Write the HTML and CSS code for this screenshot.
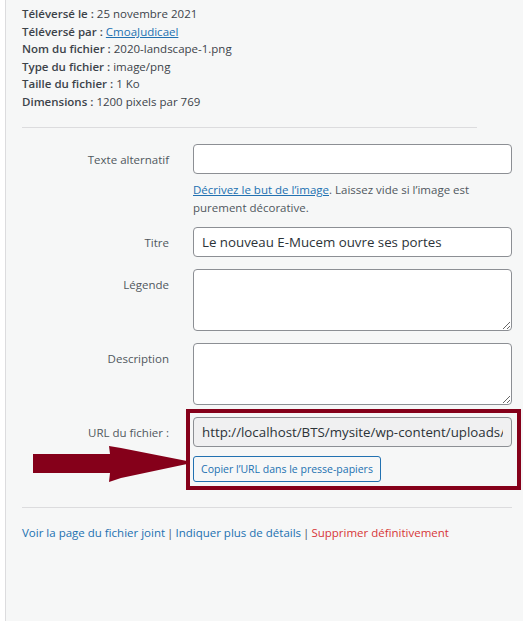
FILE: index.html
```html
<!DOCTYPE html>
<html lang="fr">
<head>
<meta charset="utf-8">
<title>Détails du fichier joint</title>
<link rel="stylesheet" href="styles.css">
</head>
<body>
<div class="panel">
  <div class="meta">
    <div><strong>Téléversé le :</strong> 25 novembre 2021</div>
    <div><strong>Téléversé par :</strong> <a href="#" class="link">CmoaJudicael</a></div>
    <div><strong>Nom du fichier :</strong> 2020-landscape-1.png</div>
    <div><strong>Type du fichier :</strong> image/png</div>
    <div><strong>Taille du fichier :</strong> 1 Ko</div>
    <div><strong>Dimensions :</strong> 1200 pixels par 769</div>
  </div>
  <hr class="sep sep-top">
  <div class="settings">
    <div class="row">
      <label class="label">Texte alternatif</label>
      <div class="field">
        <input class="input" type="text" value="">
        <p class="help"><a href="#" class="link">Décrivez le but de l’image</a>. Laissez vide si l’image est purement décorative.</p>
      </div>
    </div>
    <div class="row">
      <label class="label">Titre</label>
      <div class="field">
        <input class="input" type="text" value="Le nouveau E-Mucem ouvre ses portes">
      </div>
    </div>
    <div class="row">
      <label class="label">Légende</label>
      <div class="field">
        <textarea class="textarea"></textarea>
      </div>
    </div>
    <div class="row">
      <label class="label">Description</label>
      <div class="field">
        <textarea class="textarea"></textarea>
      </div>
    </div>
    <div class="row">
      <label class="label">URL du fichier :</label>
      <div class="field field-url">
        <input class="input input-readonly" type="text" readonly value="http://localhost/BTS/mysite/wp-content/uploads/2021/11/2020-landscape-1.png">
        <div class="copy-wrap"><button class="button-copy" type="button">Copier l’URL dans le presse-papiers</button></div>
        <div class="highlight-frame"></div>
      </div>
    </div>
  </div>
  <hr class="sep sep-bottom">
  <div class="actions">
    <a href="#" class="link plain">Voir la page du fichier joint</a><span class="pipe">|</span><a href="#" class="link plain">Indiquer plus de détails</a><span class="pipe">|</span><a href="#" class="delete">Supprimer définitivement</a>
  </div>
  <svg class="arrow" width="156" height="38" viewBox="0 0 156 38" aria-hidden="true">
    <polygon points="0,8 77,8 76,0 88,2 154,15 154,18 88,32 76,36 77,27 0,27" fill="#85001a"/>
  </svg>
</div>
</body>
</html>
```
FILE: styles.css
```css
* { box-sizing: border-box; }
html, body { margin: 0; padding: 0; background: #fff; }
body {
  font-family: "Open Sans", "Noto Sans", sans-serif;
  font-size: 11.5px;
  color: #3c434a;
}
.panel {
  position: relative;
  margin-left: 5px;
  border-left: 1px solid #dcdcde;
  background: #f6f7f7;
  min-height: 621px;
  padding: 5px 11px 0 16px;
}
.meta { line-height: 17.6px; }
.meta strong { font-weight: 600; color: #3c434a; }
.link { color: #2271b1; text-decoration: underline; }
.link.plain { text-decoration: none; }
.sep { border: 0; border-top: 1px solid #dcdcde; height: 0; margin: 16px 0 16px; }
.sep-top { width: 455px; }
.sep-bottom { width: 490px; margin: 25px 0 16px; }
.settings { display: flex; flex-direction: column; gap: 12px; }
.settings .row:first-child { margin-bottom: -2px; }
.row { display: grid; grid-template-columns: 147px 319px; column-gap: 24px; }
.label { text-align: right; color: #50575e; padding-top: 7px; line-height: 18px; }
.field { display: flex; flex-direction: column; }
.input, .textarea {
  width: 319px;
  border: 1px solid #8c8f94;
  border-radius: 4px;
  background: #fff;
  font-family: "Open Sans", "Noto Sans", sans-serif;
  font-size: 13.3px;
  color: #2c3338;
  padding: 0 8px;
  margin: 0;
}
.input { height: 30px; line-height: 28px; }
.textarea { height: 62px; padding: 2px 6px; resize: vertical; display: block; }
.input-readonly { background: #f0f0f1; }
.help { margin: 7px 0 0; line-height: 18px; color: #50575e; }
.field-url { position: relative; }
.copy-wrap { margin-top: 9px; }
.button-copy {
  display: inline-flex;
  align-items: center;
  justify-content: center;
  height: 26px;
  width: 188px;
  padding: 0;
  border: 1px solid #2271b1;
  border-radius: 3px;
  background: #f6f7f7;
  color: #2271b1;
  font-family: "Open Sans", "Noto Sans", sans-serif;
  font-size: 10.5px;
  white-space: nowrap;
}
.highlight-frame {
  position: absolute;
  left: -7px;
  top: -8px;
  width: 335px;
  height: 81px;
  border: 4px solid #85001a;
  pointer-events: none;
}
.actions { line-height: 18px; }
.pipe { color: #50575e; margin: 0 2px; }
.delete { color: #d63638; text-decoration: none; }
.arrow { position: absolute; left: 27px; top: 446px; }
```
